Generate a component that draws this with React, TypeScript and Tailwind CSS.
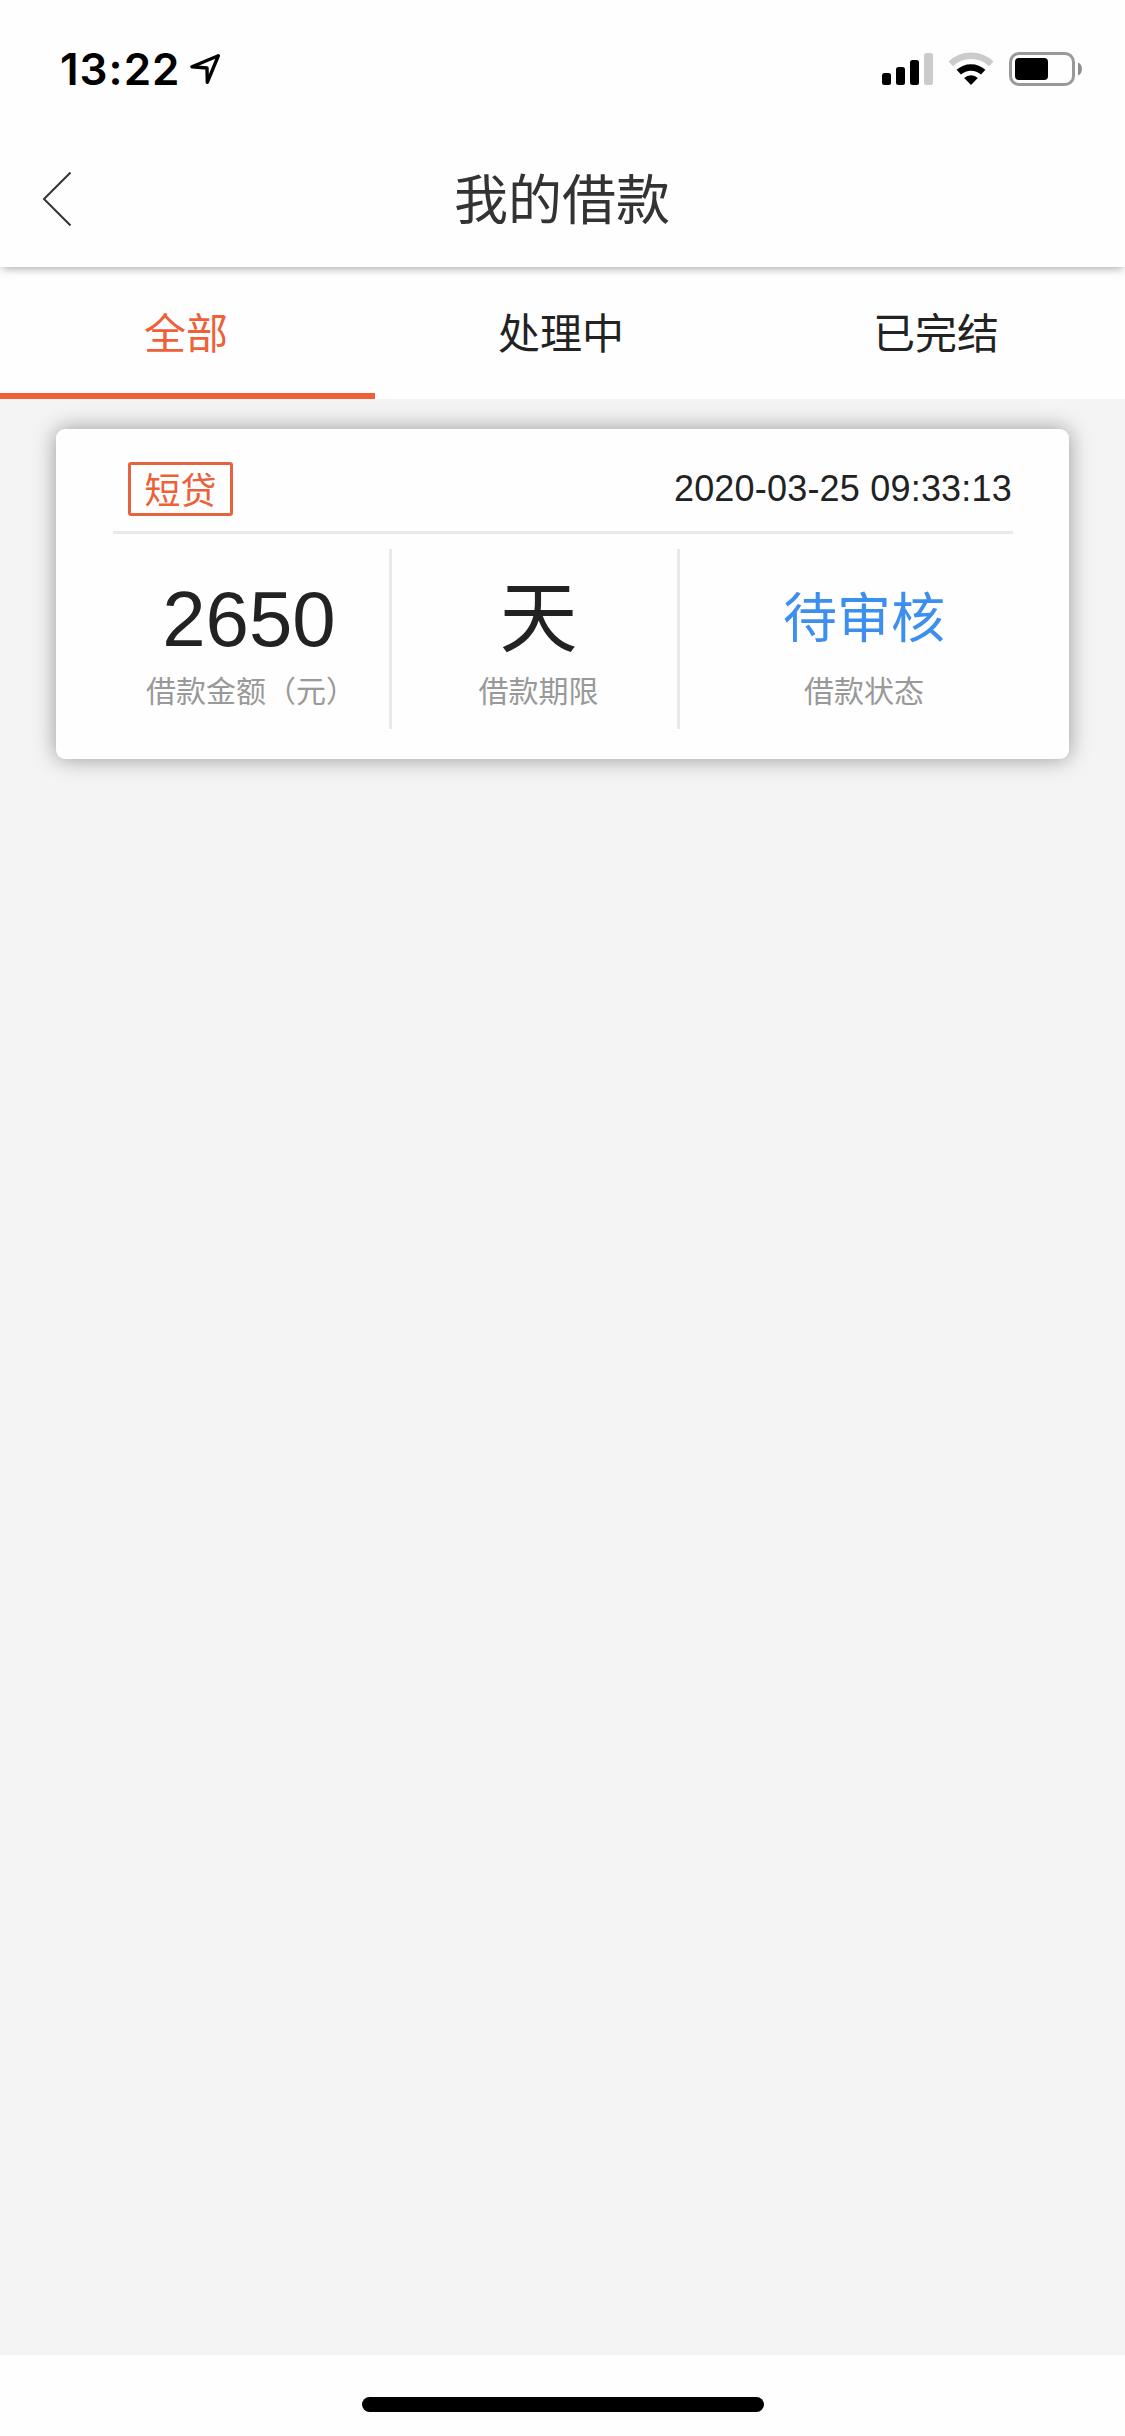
import React, { useState } from 'react';
import { clsx } from 'clsx';

interface Loan {
  id: number;
  type: string;
  createdAt: string;
  amount: string;
  term: string;
  status: string;
}

const TABS = ['全部', '处理中', '已完结'];

const LOANS: Loan[] = [
  { id: 1, type: '短贷', createdAt: '2020-03-25 09:33:13', amount: '2650', term: '天', status: '待审核' },
];

function StatusBar() {
  return (
    <div className="flex h-[132px] shrink-0 items-start justify-between pl-[60px] pr-[42px] pt-[51px]">
      <div className="flex items-start">
        <span className="w-[129px] whitespace-nowrap font-['Inter',sans-serif] text-[44px] font-semibold leading-[36px] tracking-[1px] text-black">
          13:22
        </span>
        <svg width="32" height="32" viewBox="0 0 32 32" className="ml-[1px] mt-[2px]" fill="none" aria-hidden>
          <path d="M28.3 2.8 L2 13.8 L17 15 L17.3 29.3 Z" stroke="#000" strokeWidth="3.4" strokeLinejoin="round" />
        </svg>
      </div>
      <div className="flex items-start">
        <svg width="52" height="34" viewBox="0 0 52 34" className="mr-[14px] mt-[1px]" aria-hidden>
          <rect x="0" y="21" width="9" height="12" rx="2.5" />
          <rect x="14" y="15" width="9" height="18" rx="2.5" />
          <rect x="28" y="8" width="9" height="25" rx="2.5" />
          <rect x="42" y="1" width="9" height="32" rx="2.5" fill="#cbcbcb" />
        </svg>
        <svg width="46" height="34" viewBox="0 0 46 34" className="mr-[15px] mt-[1px]" fill="none" aria-hidden>
          <path d="M2.8 11.8 A29.5 29.5 0 0 1 43.2 11.8" stroke="#cbcbcb" strokeWidth="6.6" />
          <path d="M10.8 20.2 A18 18 0 0 1 35.2 20.2" stroke="#000" strokeWidth="6.5" />
          <path d="M23 33 L16.2 26 A10 10 0 0 1 29.8 26 Z" fill="#000" />
        </svg>
        <svg width="74" height="34" viewBox="0 0 74 34" className="mt-[1px]" fill="none" aria-hidden>
          <rect x="1.5" y="1.5" width="63" height="31" rx="8.5" stroke="#999" strokeWidth="3" />
          <rect x="6" y="6" width="33" height="22" rx="4" fill="#000" />
          <path d="M69 10.5 C74.2 12.5 74.2 21.5 69 23.5 Z" fill="#8c8c8c" />
        </svg>
      </div>
    </div>
  );
}

function Header({ title }: { title: string }) {
  return (
    <header className="z-10 shrink-0 bg-[#fefefe] shadow-[0_3px_9px_-2px_rgba(0,0,0,0.38)]">
      <StatusBar />
      <div className="grid h-[135px] grid-cols-[1fr_auto_1fr] items-center">
        <button type="button" aria-label="返回" className="justify-self-start pb-[2px] pl-[42px]">
          <svg width="30" height="56" viewBox="0 0 30 56" fill="none" aria-hidden>
            <path d="M28.5 1.5 L2 28 L28.5 54.5" stroke="#333" strokeWidth="2" />
          </svg>
        </button>
        <h1 className="pr-[1px] pt-[3px] text-[54px] leading-[60px] text-[#333]">{title}</h1>
      </div>
    </header>
  );
}

function Column({ label, children, className }: { label: string; children: React.ReactNode; className?: string }) {
  return (
    <div className={clsx('flex h-[180px] flex-col items-center whitespace-nowrap', className)}>
      <div className="flex h-[117px] items-center pt-[22px]">{children}</div>
      <div className="mt-[4px] text-[30px] leading-[44px] text-[#999]">{label}</div>
    </div>
  );
}

function LoanCard({ loan }: { loan: Loan }) {
  return (
    <div className="h-[330px] w-[1013px] rounded-[9px] bg-[#fefefe] pl-[57px] pr-[56px] shadow-[0_0_22px_rgba(0,0,0,0.38)]">
      <div className="flex h-[105px] items-start justify-between border-b-[3px] border-[#e9e9e9] pt-[33px]">
        <span className="ml-[15px] flex h-[54px] w-[105px] items-center justify-center rounded-[3px] border-[3px] border-[#e66340] pt-[6px] text-[36px] leading-[48px] text-[#ee6037]">
          {loan.type}
        </span>
        <span className="pr-[1px] text-[36px] leading-[54px] tracking-[0.2px]">{loan.createdAt}</span>
      </div>
      <div className="mt-[15px] flex">
        <Column label="借款金额（元）" className="w-[279px] border-r-[3px] border-[#e9e9e9]">
          <span className="pr-[4px] text-[78px] leading-[76px]">{loan.amount}</span>
        </Column>
        <Column label="借款期限" className="w-[288px] border-r-[3px] border-[#e9e9e9] pl-[8px]">
          <span className="text-[78px] leading-[78px]">{loan.term}</span>
        </Column>
        <Column label="借款状态" className="flex-1 pl-[35px]">
          <span className="text-[54px] leading-[60px] text-[#3d8fee]">{loan.status}</span>
        </Column>
      </div>
    </div>
  );
}

export default function App() {
  const [active, setActive] = useState(0);

  return (
    <div className="flex h-[2436px] w-[1125px] flex-col overflow-hidden bg-[#f4f4f4] font-['Liberation_Sans','Noto_Sans_CJK_SC',sans-serif] text-[#222]">
      <Header title="我的借款" />

      <nav className="grid h-[132px] shrink-0 grid-cols-3 bg-[#fefefe]">
        {TABS.map((tab, i) => (
          <button
            key={tab}
            type="button"
            onClick={() => setActive(i)}
            className={clsx(
              'border-b-[6px] pr-[3px] pt-[10px] text-[42px] leading-[60px]',
              active === i ? 'border-[#ee6037] text-[#ee6037]' : 'border-transparent'
            )}
          >
            {tab}
          </button>
        ))}
      </nav>

      <main className="flex flex-1 flex-col items-center gap-[30px] pt-[30px]">
        {LOANS.map((loan) => (
          <LoanCard key={loan.id} loan={loan} />
        ))}
      </main>

      <footer className="flex h-[81px] shrink-0 justify-center bg-[#fefefe] pt-[42px]">
        <div className="h-[15px] w-[402px] rounded-full bg-black" />
      </footer>
    </div>
  );
}
